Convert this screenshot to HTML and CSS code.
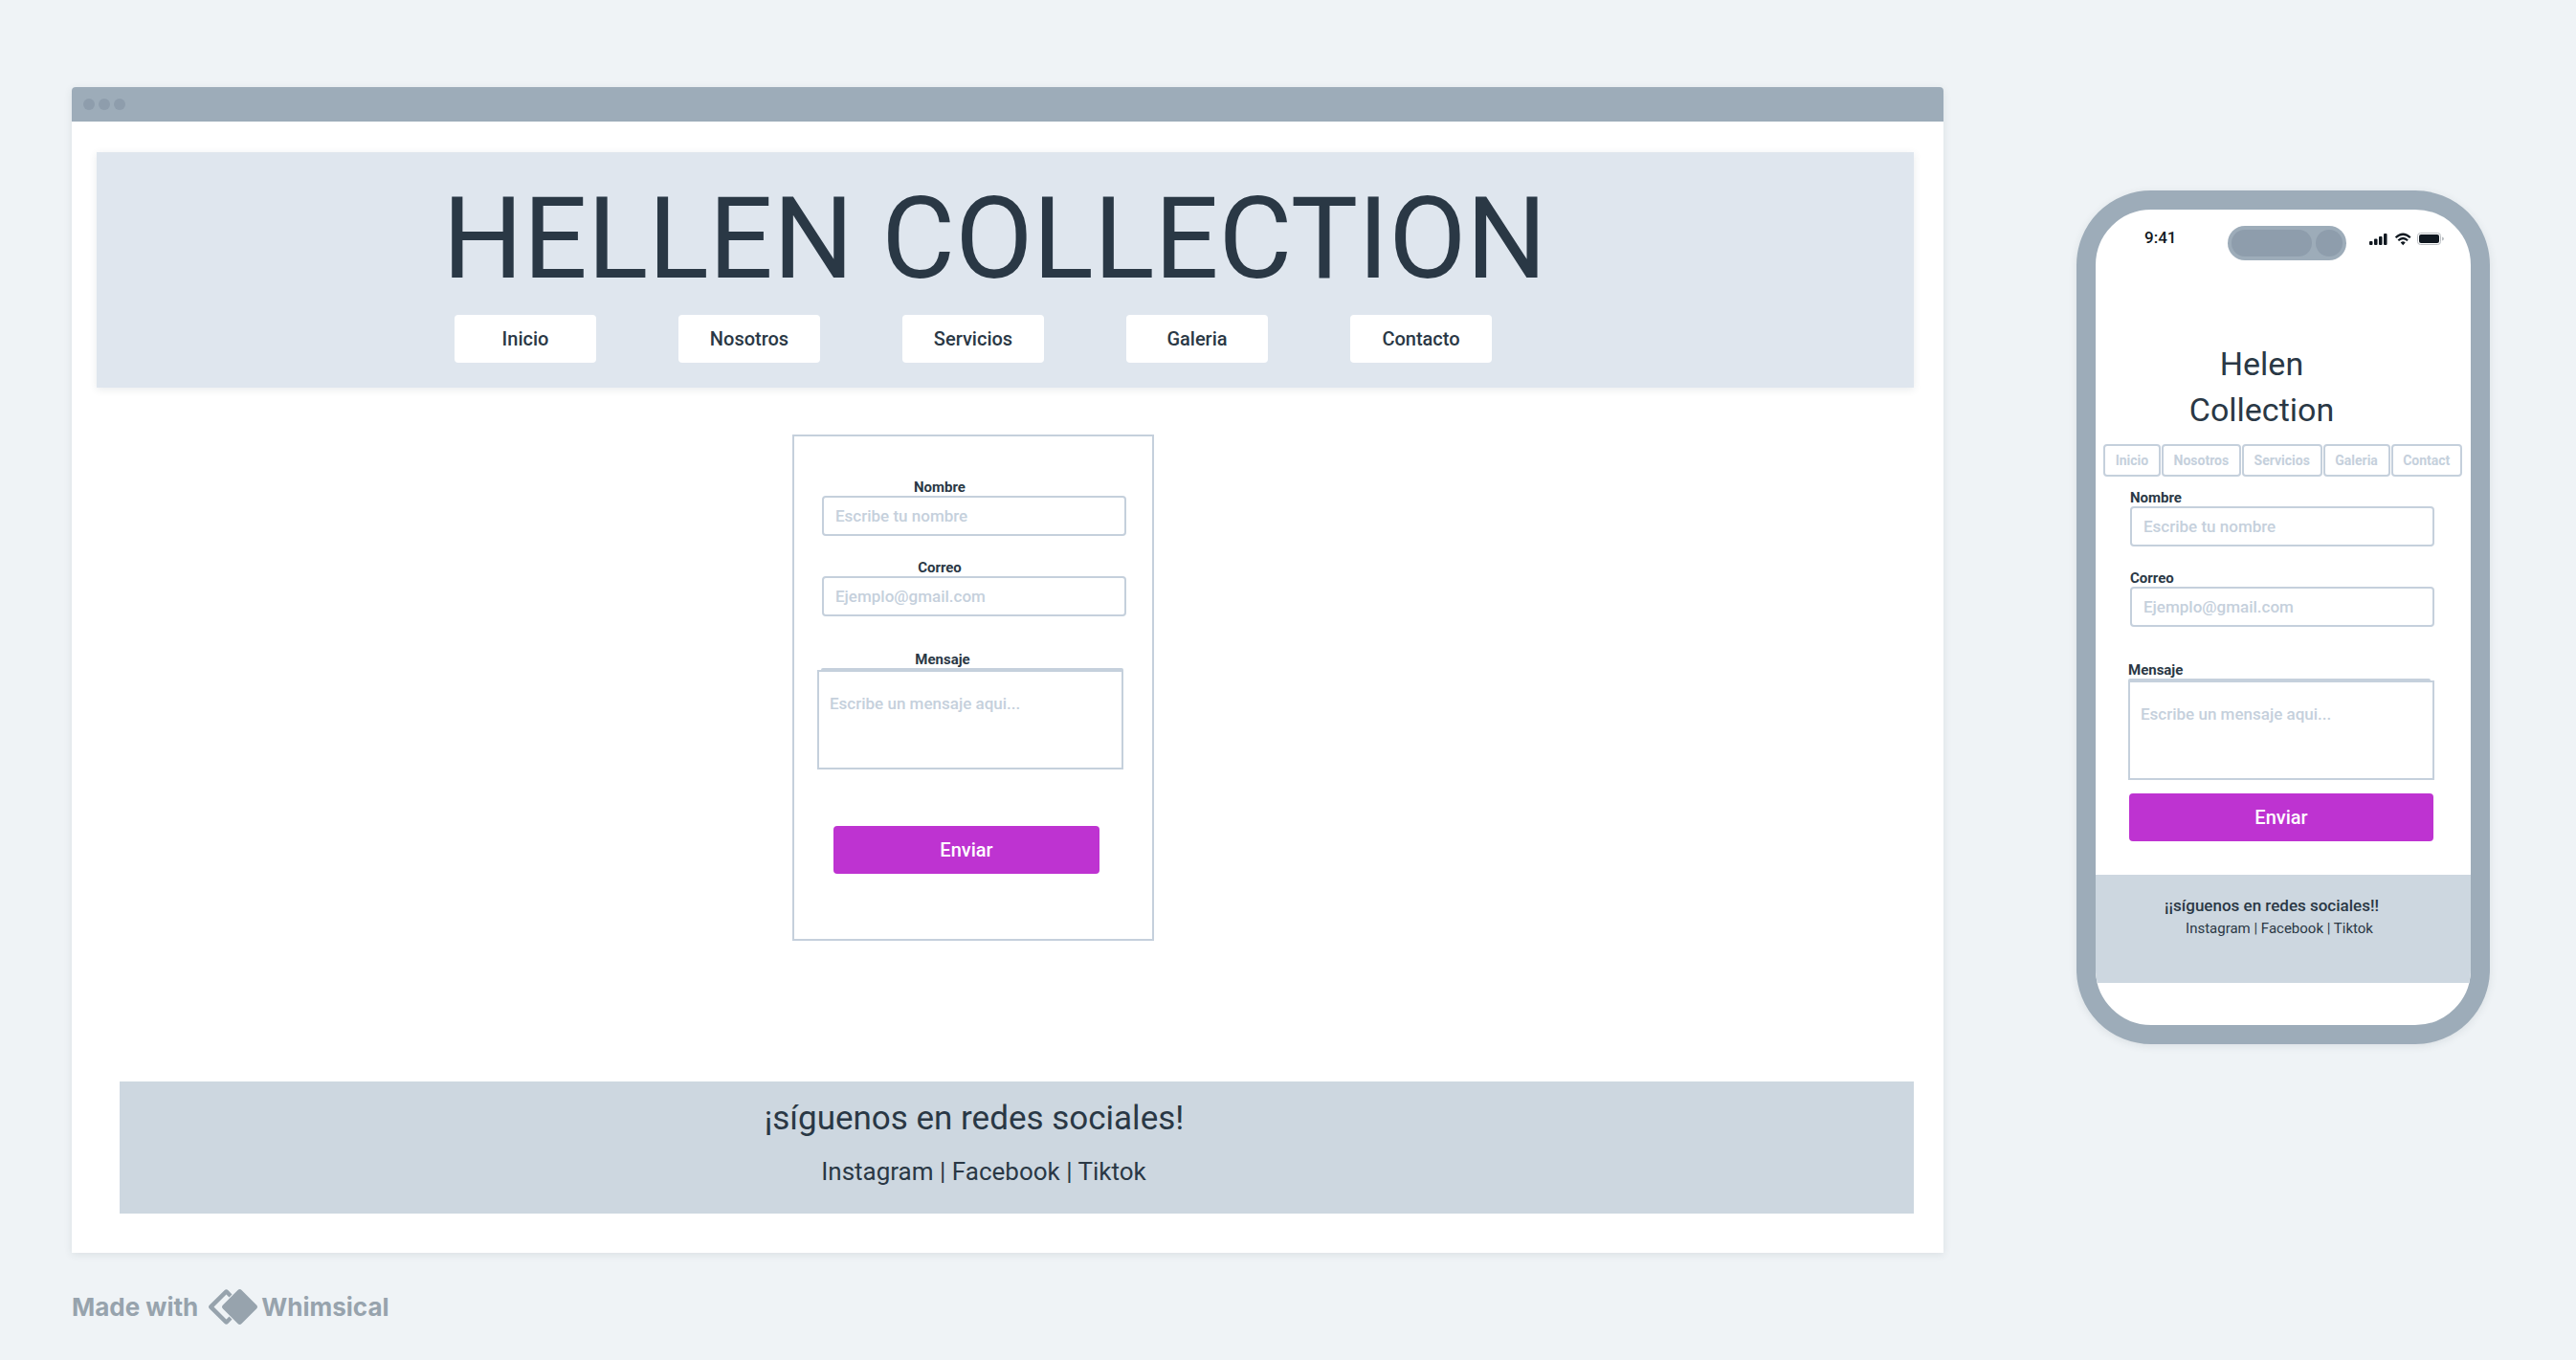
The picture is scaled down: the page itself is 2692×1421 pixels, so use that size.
FILE: index.html
```html
<!DOCTYPE html>
<html lang="es">
<head>
<meta charset="utf-8">
<meta name="viewport" content="width=device-width, initial-scale=1">
<title>Hellen Collection - Contacto</title>
<link rel="stylesheet" href="styles.css">
</head>
<body>
<div class="board">
  <section class="window">
    <div class="window-bar"><span class="dot"></span><span class="dot"></span><span class="dot"></span></div>
    <div class="window-body">
      <header class="banner">
        <h1 class="banner-title">HELLEN COLLECTION</h1>
        <nav class="banner-nav">
          <a href="#inicio">Inicio</a>
          <a href="#nosotros">Nosotros</a>
          <a href="#servicios">Servicios</a>
          <a href="#galeria">Galeria</a>
          <a href="#contacto">Contacto</a>
        </nav>
      </header>
      <main class="content">
        <form class="form form-card">
          <div class="field">
            <label for="nombre">Nombre</label>
            <input id="nombre" type="text" placeholder="Escribe tu nombre">
          </div>
          <div class="field">
            <label for="correo">Correo</label>
            <input id="correo" type="email" placeholder="Ejemplo@gmail.com">
          </div>
          <div class="field field-message">
            <label for="mensaje">Mensaje</label>
            <textarea id="mensaje" placeholder="Escribe un mensaje aqui..."></textarea>
          </div>
          <button class="send" type="submit">Enviar</button>
        </form>
      </main>
      <footer class="social">
        <p class="social-title">¡síguenos en redes sociales!</p>
        <p class="social-links"><a href="#instagram">Instagram</a> | <a href="#facebook">Facebook</a> | <a href="#tiktok">Tiktok</a></p>
      </footer>
    </div>
  </section>

  <section class="phone">
    <div class="status">
      <span class="clock">9:41</span>
      <span class="island"><span class="speaker"></span><span class="camera"></span></span>
      <svg class="status-icons" width="78" height="28" viewBox="0 0 78 28" aria-hidden="true">
        <g fill="#101820">
          <rect x="0" y="16" width="3.500" height="4" rx="1"/>
          <rect x="5" y="13.500" width="3.500" height="6.500" rx="1"/>
          <rect x="10" y="11" width="3.500" height="9" rx="1"/>
          <rect x="15" y="8" width="3.500" height="12" rx="1"/>
          <path d="M32.700 17.400 L35.200 20.200 L37.700 17.400 Q35.200 15.300 32.700 17.400Z"/>
        </g>
        <g fill="none" stroke="#101820" stroke-width="2.200">
          <path d="M27.600 12.200 Q35.200 5.300 42.800 12.200"/>
          <path d="M30.300 15.200 Q35.200 10.800 40.100 15.200"/>
        </g>
        <rect x="50.500" y="7.500" width="24" height="12" rx="3" fill="none" stroke="#b9bdc1"/>
        <rect x="52" y="9" width="21" height="9" rx="2" fill="#101820"/>
        <path d="M76 11.500 Q78 12 78 13.500 Q78 15 76 15.500Z" fill="#b9bdc1"/>
      </svg>
    </div>
    <h2 class="phone-title">Helen<br>Collection</h2>
    <nav class="phone-nav">
      <a href="#inicio">Inicio</a>
      <a href="#nosotros">Nosotros</a>
      <a href="#servicios">Servicios</a>
      <a href="#galeria">Galeria</a>
      <a href="#contacto">Contact</a>
    </nav>
    <form class="form form-phone">
      <div class="field">
        <label for="m-nombre">Nombre</label>
        <input id="m-nombre" type="text" placeholder="Escribe tu nombre">
      </div>
      <div class="field">
        <label for="m-correo">Correo</label>
        <input id="m-correo" type="email" placeholder="Ejemplo@gmail.com">
      </div>
      <div class="field field-message">
        <label for="m-mensaje">Mensaje</label>
        <textarea id="m-mensaje" placeholder="Escribe un mensaje aqui..."></textarea>
      </div>
      <button class="send" type="submit">Enviar</button>
    </form>
    <footer class="phone-social">
      <p class="phone-social-title">¡¡síguenos en redes sociales!!</p>
      <p class="phone-social-links"><a href="#instagram">Instagram</a> | <a href="#facebook">Facebook</a> | <a href="#tiktok">Tiktok</a></p>
    </footer>
  </section>

  <div class="credit">
    <span>Made with</span>
    <svg width="51" height="37" viewBox="0 0 51 37" aria-hidden="true">
      <path d="M32.500 0 Q33.500 0 34.500 1 L50 16.500 Q52 18.500 50 20.500 L34.500 36 Q32.500 38 30.500 36 L15 20.500 Q13 18.500 15 16.500 L30.500 1 Q31.500 0 32.500 0Z" fill="#97a3ad"/>
      <path d="M24.500 5.500 L20.500 1.200 Q18.500 -.7 16.500 1.200 L1 16.500 Q-1 18.500 1 20.500 L16.500 35.800 Q18.500 37.700 20.500 35.800 L24.500 31.500 L21.500 28.600 L18.500 31.500 L5.500 18.500 L18.500 5.500 L21.500 8.400Z" fill="#97a3ad"/>
    </svg>
    <span>Whimsical</span>
  </div>
</div>
</body>
</html>
```
FILE: styles.css
```css
:root {
  --ink: #2a3845;
  --line: #c5d0dc;
  --frame: #9dacb9;
  --frame-dark: #8e9dac;
  --accent: #be33d1;
  --shade: #cdd7e0;
}

* {
  box-sizing: border-box;
}

body {
  margin: 0;
  background: #eff3f6;
  color: var(--ink);
  font-family: Roboto, "Liberation Sans", sans-serif;
}

h1, h2, p {
  margin: 0;
  font-weight: 400;
}

a {
  color: inherit;
  text-decoration: none;
}

.board {
  display: grid;
  grid-template-columns: minmax(0, 1fr) 432px;
  column-gap: 139px;
  row-gap: 38px;
  align-items: start;
  padding: 91px 90px 37px 75px;
}

/* Desktop window */
.window {
  overflow: hidden;
  border-radius: 4px 4px 0 0;
  background: #fff;
  box-shadow: 0 2px 8px rgba(40, 56, 70, 0.1);
}

.window-bar {
  display: flex;
  align-items: center;
  gap: 4px;
  height: 36px;
  padding-left: 12px;
  background: var(--frame);
}

.dot {
  width: 12px;
  height: 12px;
  border-radius: 50%;
  background: var(--frame-dark);
}

.window-body {
  padding: 32px 31px 41px 26px;
}

.banner {
  padding: 22px 0 26px;
  background: #dfe6ee;
  box-shadow: 0 2px 8px rgba(40, 56, 70, 0.1);
}

.banner-title {
  padding-right: 22px;
  font-size: 118px;
  line-height: 138px;
  text-align: center;
}

.banner-nav {
  display: flex;
  justify-content: center;
  gap: 86px;
  margin-top: 10px;
  padding-right: 67px;
}

.banner-nav a {
  width: 148px;
  border-radius: 4px;
  background: #fff;
  font-size: 20px;
  font-weight: 500;
  line-height: 50px;
  text-align: center;
}

/* Contact form */
.content {
  display: flex;
  justify-content: center;
  padding: 49px 67px 147px 0;
}

.form {
  display: flex;
  flex-direction: column;
}

.field {
  display: flex;
  flex-direction: column;
  margin-bottom: 24px;
}

.field label {
  font-size: 15px;
  font-weight: 700;
  line-height: 18px;
}

.field input,
.field textarea {
  width: 100%;
  margin: 0;
  border: 2px solid var(--line);
  background: #fff;
  color: var(--ink);
  font: 500 17px/20px Roboto, "Liberation Sans", sans-serif;
}

.field input {
  height: 42px;
  padding: 0 12px;
  border-radius: 4px;
}

.field textarea {
  display: block;
  height: 104px;
  padding: 23px 11px;
  resize: none;
}

.field ::placeholder {
  color: var(--line);
  opacity: 1;
}

.field-message {
  margin-top: 12px;
}

.field-message::after {
  content: "";
  order: 1;
  height: 2px;
  margin-left: 4px;
  border-radius: 2px 2px 0 0;
  background: var(--line);
}

.field-message textarea {
  order: 2;
}

.send {
  height: 50px;
  padding: 0;
  border: 0;
  border-radius: 4px;
  background: var(--accent);
  color: #fff;
  font: 500 20px/24px Roboto, "Liberation Sans", sans-serif;
}

.form-card {
  width: 378px;
  padding: 44px 27px 68px 29px;
  border: 2px solid var(--line);
}

.form-card label {
  padding-right: 72px;
  text-align: center;
}

.form-card .field-message {
  margin-right: 3px;
  margin-bottom: 59px;
  margin-left: -5px;
}

.form-card .field-message label {
  padding-right: 58px;
}

.form-card .send {
  margin: 0 28px 0 12px;
}

/* Desktop footer */
.social {
  margin-left: 24px;
  padding: 18px 0 28px;
  background: var(--shade);
  text-align: center;
}

.social-title {
  padding-right: 89px;
  font-size: 35px;
  line-height: 42px;
}

.social-links {
  margin-top: 18px;
  padding-right: 69px;
  font-size: 26px;
  line-height: 32px;
}

/* Phone */
.phone {
  overflow: hidden;
  margin-top: 108px;
  padding-bottom: 44px;
  border: 20px solid var(--frame);
  border-radius: 78px;
  background: #fff;
  box-shadow: 0 2px 8px rgba(40, 56, 70, 0.1);
  grid-column: 2;
  grid-row: 1 / 3;
}

.status {
  display: flex;
  align-items: flex-start;
  padding: 17px 28px 0 51px;
}

.clock {
  width: 87px;
  color: #101820;
  font-size: 17px;
  font-weight: 500;
  line-height: 24px;
}

.island {
  display: flex;
  gap: 4px;
  width: 124px;
  height: 36px;
  margin-right: 24px;
  padding: 4px;
  border-radius: 18px;
  background: var(--frame);
}

.speaker,
.camera {
  width: 28px;
  border-radius: 14px;
  background: var(--frame-dark);
}

.speaker {
  width: 84px;
}

.phone-title {
  margin-top: 84px;
  padding-right: 45px;
  font-size: 34px;
  line-height: 48px;
  text-align: center;
}

.phone-nav {
  display: flex;
  gap: 1px;
  margin-top: 12px;
  padding: 0 9px 0 8px;
}

.phone-nav a {
  flex: 1 1 auto;
  border: 2px solid var(--line);
  border-radius: 4px;
  color: var(--line);
  font-size: 14px;
  font-weight: 700;
  line-height: 30px;
  text-align: center;
}

.form-phone {
  margin: 13px 38px 35px 36px;
}

.form-phone .field-message {
  margin-bottom: 14px;
  margin-left: -2px;
}

.form-phone .field-message::after {
  margin: 0 4px 0 0;
}

.form-phone .send {
  margin: 0 1px 0 -1px;
}

.phone-social {
  padding: 21px 0 48px;
  background: var(--shade);
  text-align: center;
}

.phone-social-title {
  padding-right: 24px;
  font-size: 17px;
  font-weight: 500;
  line-height: 22px;
}

.phone-social-links {
  margin-top: 4px;
  padding-right: 8px;
  font-size: 15px;
  line-height: 18px;
}

/* Credit */
.credit {
  display: flex;
  align-items: center;
  grid-column: 1;
  color: #97a3ad;
  font: 700 26px/37px Inter, "Liberation Sans", sans-serif;
}

.credit svg {
  margin: 0 4px 0 11px;
}
```
